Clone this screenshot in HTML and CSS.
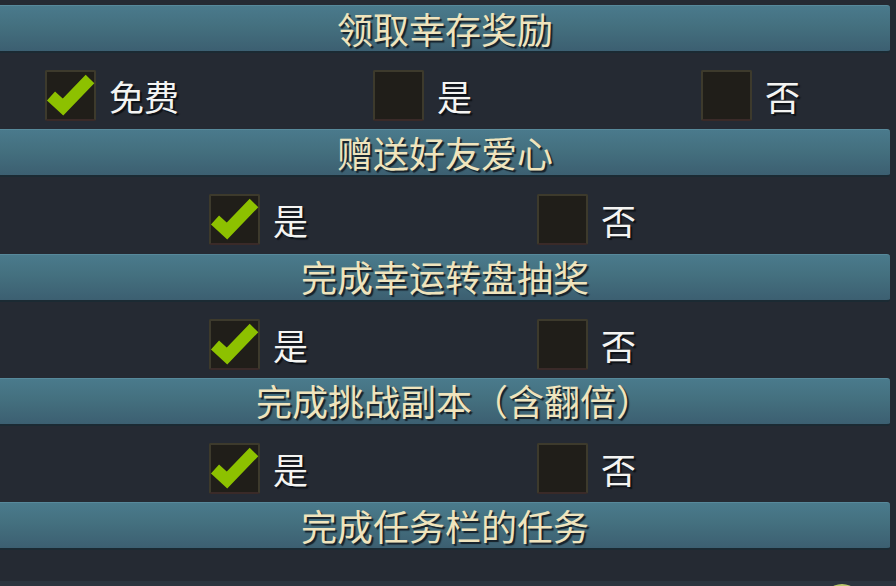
FILE: index.html
```html
<!DOCTYPE html>
<html lang="zh-CN">
<head>
    <meta charset="UTF-8">
    <meta name="viewport" content="width=device-width, initial-scale=1.0">
    <title>每日任务设置</title>
    <link rel="stylesheet" href="styles.css">
</head>
<body>
    <div class="panel">
        <div class="section">
            <div class="bar"><span>领取幸存奖励</span></div>
            <div class="options">
                <div class="option">
                    <span class="box checked"><svg viewBox="0 0 51 51"><polyline points="6,26 18,37 45,9"/></svg></span>
                    <span class="label">免费</span>
                </div>
                <div class="option">
                    <span class="box"></span>
                    <span class="label">是</span>
                </div>
                <div class="option">
                    <span class="box"></span>
                    <span class="label">否</span>
                </div>
            </div>
        </div>

        <div class="section">
            <div class="bar"><span>赠送好友爱心</span></div>
            <div class="options">
                <div class="option">
                    <span class="box checked"><svg viewBox="0 0 51 51"><polyline points="6,26 18,37 45,9"/></svg></span>
                    <span class="label">是</span>
                </div>
                <div class="option">
                    <span class="box"></span>
                    <span class="label">否</span>
                </div>
            </div>
        </div>

        <div class="section">
            <div class="bar"><span>完成幸运转盘抽奖</span></div>
            <div class="options">
                <div class="option">
                    <span class="box checked"><svg viewBox="0 0 51 51"><polyline points="6,26 18,37 45,9"/></svg></span>
                    <span class="label">是</span>
                </div>
                <div class="option">
                    <span class="box"></span>
                    <span class="label">否</span>
                </div>
            </div>
        </div>

        <div class="section">
            <div class="bar bar-paren"><span>完成挑战副本（含翻倍）</span></div>
            <div class="options">
                <div class="option">
                    <span class="box checked"><svg viewBox="0 0 51 51"><polyline points="6,26 18,37 45,9"/></svg></span>
                    <span class="label">是</span>
                </div>
                <div class="option">
                    <span class="box"></span>
                    <span class="label">否</span>
                </div>
            </div>
        </div>

        <div class="section last">
            <div class="bar"><span>完成任务栏的任务</span></div>
        </div>
    </div>
    <div class="footer">
        <span class="knob"></span>
    </div>
</body>
</html>
```

FILE: styles.css
```css
body{
    margin: 0;
    width: 896px;
    height: 586px;
    overflow: hidden;
    background-color: #252a33;
    font-family: "Noto Sans CJK SC", "Noto Sans", sans-serif;
}
.panel{
    width: 890px;
    padding-top: 5px;
}
.section{
    height: 124.25px;
}
.section.last{
    height: 75px;
}
.bar{
    height: 48px;
    box-sizing: border-box;
    border-top: 1px solid #57899b;
    border-bottom: 2px solid #1b2a33;
    border-radius: 0 3px 3px 0;
    background: linear-gradient(to bottom, #4a7a8c 0%, #44707f 45%, #3c5f71 100%);
    display: flex;
    justify-content: center;
    align-items: center;
}
.bar-paren{
    padding-left: 18px;
}
.bar span{
    font-size: 36px;
    line-height: 1;
    color: #efe4bd;
    text-shadow: 2px 2px 1px #16212a;
    margin-top: -2px;
}
.options{
    display: flex;
    justify-content: center;
    padding-top: 17px;
}
.option{
    flex-shrink: 0;
    width: 328px;
    box-sizing: border-box;
    padding-left: 92px;
    display: flex;
    align-items: center;
}
.box{
    width: 51px;
    height: 51px;
    box-sizing: border-box;
    background-color: #201e19;
    border: 2px solid #3d3a2c;
    border-bottom-color: #3a2a28;
    border-radius: 2px;
    display: block;
}
.box svg{
    display: block;
    width: 51px;
    height: 51px;
    margin: -2px;
}
.box polyline{
    fill: none;
    stroke: #8dc100;
    stroke-width: 12;
    stroke-linejoin: miter;
    stroke-linecap: butt;
}
.label{
    margin-left: 13px;
    font-size: 35px;
    line-height: 1;
    color: #f4f4f2;
    text-shadow: 2px 2px 1px #0e1116;
}
.footer{
    margin-top: 4px;
    height: 10px;
    background-color: #2b343e;
    position: relative;
    overflow: hidden;
}
.knob{
    position: absolute;
    left: 822px;
    top: 3px;
    width: 40px;
    height: 40px;
    border-radius: 50%;
    background-color: #b9c76a;
}
```
